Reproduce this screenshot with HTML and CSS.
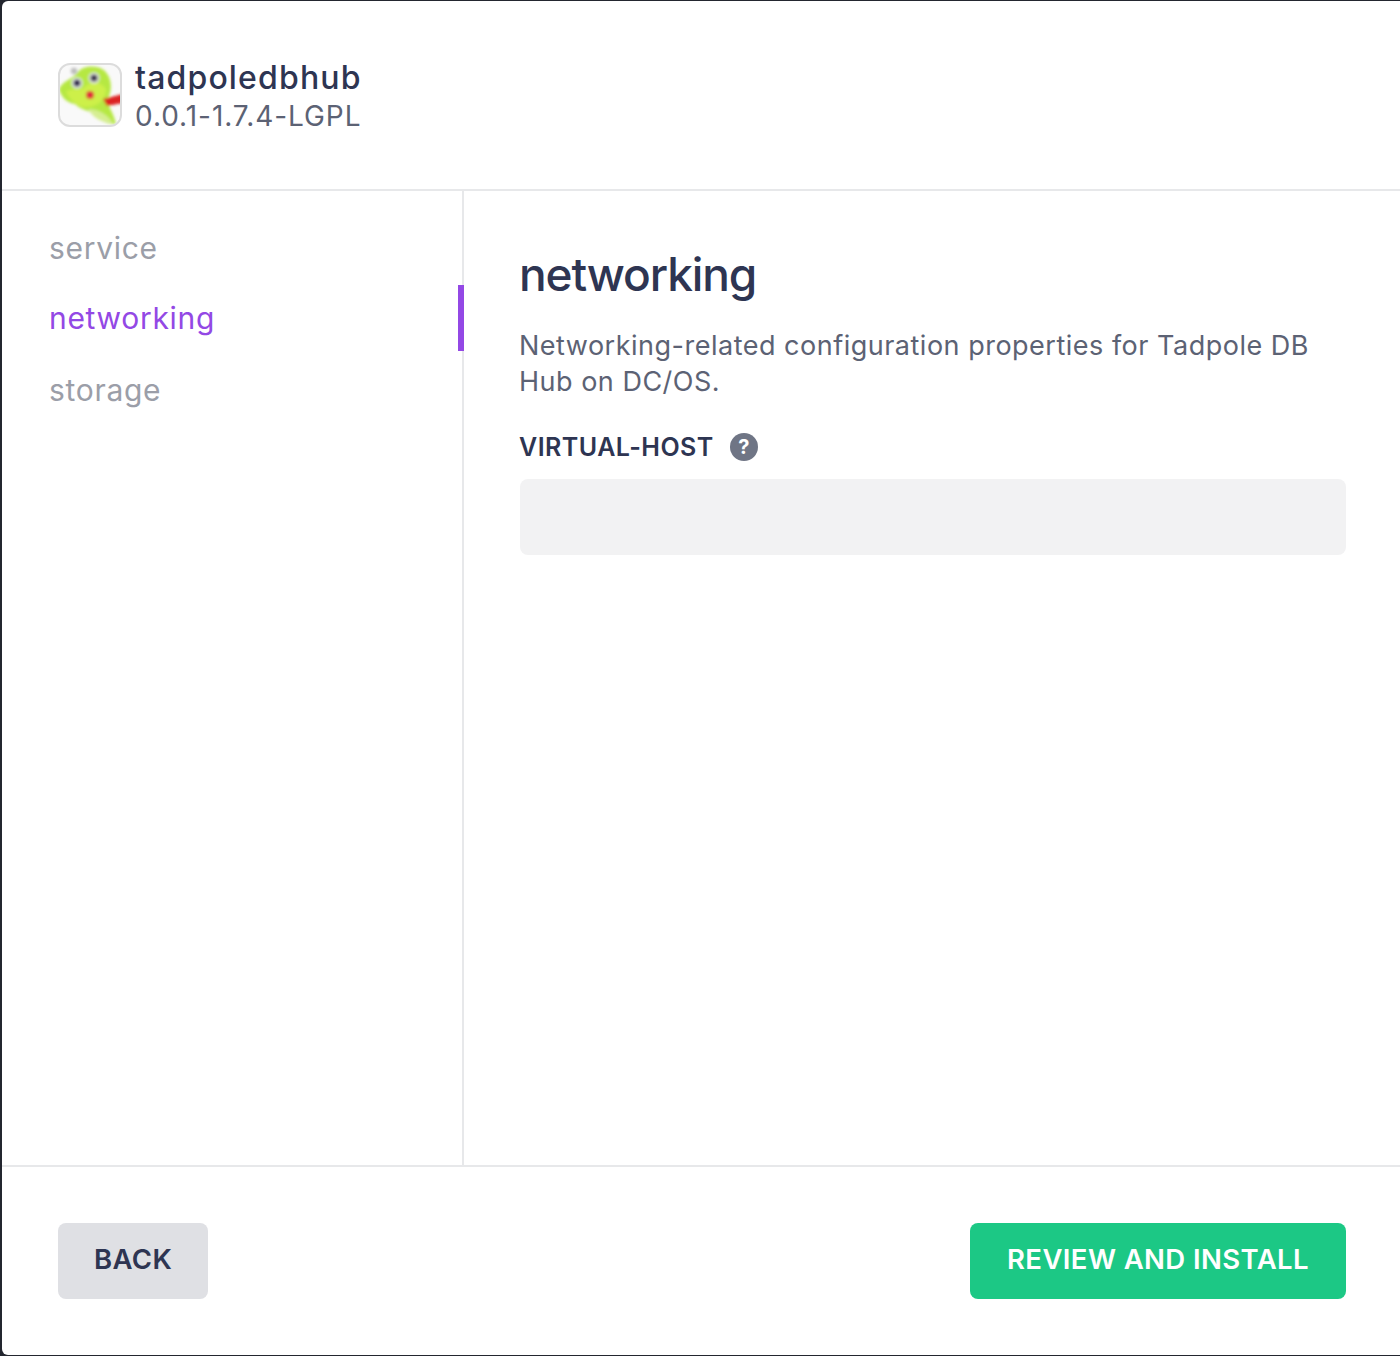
FILE: index.html
```html
<!DOCTYPE html>
<html lang="en">
<head>
<meta charset="utf-8">
<title>tadpoledbhub</title>
<link rel="stylesheet" href="styles.css">
</head>
<body>
<div class="modal">
  <header class="head">
    <div class="logo">
      <svg width="60" height="60" viewBox="0 0 60 60">
        <defs><filter id="b" x="-20%" y="-20%" width="140%" height="140%"><feGaussianBlur stdDeviation="1.600"/></filter></defs>
        <g filter="url(#b)">
          <path d="M-1 24 C3 15 12 15 18 7 C24 0 38 0 45 6 C52 13 53 26 47 35 C49 43 54 49 56 59 C47 60 38 54 31 47 C24 45 19 43 15 39 C7 38 1 32 -1 24Z" fill="#b6e842"/>
          <path d="M6 27 C12 22 20 27 25 22 C32 15 41 17 46 24 C46 35 37 42 26 42 C17 42 10 35 6 27Z" fill="#cdf04a"/>
          <path d="M28 44 C37 44 46 48 53 58 C44 59 33 53 28 44Z" fill="#d6ee92"/>
          <ellipse cx="17" cy="18" rx="5.500" ry="5.500" fill="#e4e4ee"/>
          <circle cx="17" cy="18" r="3.500" fill="#2a2848"/>
          <ellipse cx="34" cy="13" rx="5.500" ry="5.500" fill="#e4e4e8"/>
          <circle cx="34" cy="13" r="3.500" fill="#383648"/>
          <circle cx="30" cy="30" r="4" fill="#e02a3c"/>
          <path d="M43 34 L63 29 L63 38 L47 41Z" fill="#dc2020"/>
          <circle cx="14" cy="6" r="3.200" fill="#bcbcbc"/>
        </g>
      </svg>
    </div>
    <div class="pkg">
      <div class="pkg-name">tadpoledbhub</div>
      <div class="pkg-ver">0.0.1-1.7.4-LGPL</div>
    </div>
  </header>
  <div class="main">
    <nav class="side">
      <a class="nav-item">service</a>
      <a class="nav-item active">networking</a>
      <a class="nav-item">storage</a>
    </nav>
    <section class="content">
      <h1 class="title">networking</h1>
      <p class="desc">Networking-related configuration properties for Tadpole DB Hub on DC/OS.</p>
      <label class="label">VIRTUAL-HOST
        <svg class="help" width="28" height="28" viewBox="0 0 28 28"><circle cx="14" cy="14" r="14" fill="#6f7585"/><text class="help-mark" x="14" y="20.500" text-anchor="middle">?</text></svg>
      </label>
      <div class="field"></div>
    </section>
  </div>
  <footer class="foot">
    <button class="btn back">BACK</button>
    <button class="btn go">REVIEW AND INSTALL</button>
  </footer>
</div>
</body>
</html>
```
FILE: styles.css
```css
* { box-sizing: border-box; }
html, body { margin: 0; height: 100%; }
body { background: #23262f; padding: 1px 0 1px 2px; font-family: Inter, "Liberation Sans", sans-serif; }
.modal { background: #fff; height: 1354px; border-radius: 6px 0 0 6px; display: flex; flex-direction: column; overflow: hidden; }
.head { height: 190px; border-bottom: 2px solid #e7e8ea; padding: 62px 0 0 56px; display: flex; flex: none; }
.logo { width: 64px; height: 64px; border: 2px solid #dcdcdc; border-radius: 12px; overflow: hidden; background: #f9f9f9; flex: none; }
.logo svg { display: block; }
.pkg { margin-left: 13px; margin-top: -4px; }
.pkg-name { font-size: 32px; font-weight: 500; line-height: 38px; color: #2e3552; letter-spacing: 1.15px; }
.pkg-ver { font-size: 28px; line-height: 38px; color: #5c6274; letter-spacing: 0.95px; }
.main { flex: 1; display: flex; min-height: 0; }
.side { width: 462px; flex: none; border-right: 2px solid #e7e8ea; padding-top: 21px; display: flex; flex-direction: column; }
.nav-item { position: relative; display: block; height: 70px; padding-left: 47px; font-size: 30px; line-height: 72px; color: #9b9ea8; letter-spacing: 0.7px; }
.nav-item.active { color: #9348e5; height: 72px; }
.nav-item.active::after { content: ""; position: absolute; right: -2px; top: 3px; width: 6px; height: 66px; background: #9348e5; }
.content { flex: 1; padding: 51px 54px 0 56px; }
.title { margin: 0 0 0 -1px; font-size: 46px; font-weight: 500; line-height: 64px; color: #2e3552; letter-spacing: -1.1px; }
.desc { margin: 22px 0 0 -1px; font-size: 27px; line-height: 36px; color: #5c6274; letter-spacing: 0.5px; }
.label { display: flex; align-items: center; margin: 33px 0 0 -1px; font-size: 25px; font-weight: 600; line-height: 28px; color: #2e3552; letter-spacing: 0.47px; }
.help { margin-left: 16px; flex: none; }
.help-mark { font-size: 20px; font-weight: 700; fill: #fff; }
.field { height: 76px; margin-top: 18px; background: #f2f2f3; border-radius: 8px; }
.foot { height: 190px; flex: none; border-top: 2px solid #e7e8ea; padding: 56px 54px 0 56px; display: flex; justify-content: space-between; align-items: flex-start; }
.btn { height: 76px; border: 0; border-radius: 8px; font-family: inherit; font-size: 27.500px; font-weight: 600; padding: 0 0 5px; letter-spacing: 0.4px; }
.back { width: 150px; background: #dfe0e4; color: #2e3552; }
.go { width: 376px; background: #1cc885; color: #fff; }
```
